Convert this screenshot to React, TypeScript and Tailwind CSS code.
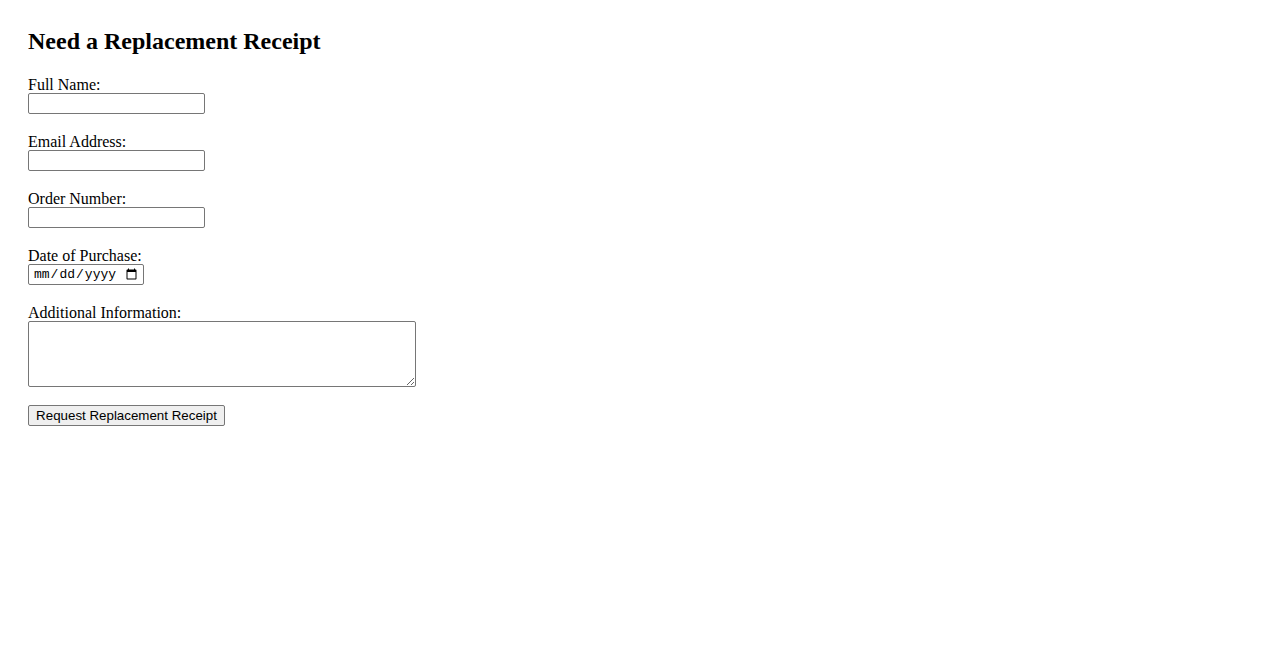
import React from "react";

export default function App() {
  const inputCls =
    "block w-[177px] h-[21px] border border-[#767676] rounded-[2px] bg-white px-[2px] text-[13.33px] [font-family:'Liberation_Sans',Arial,sans-serif] outline-none";
  const labelCls = "block h-[18px] text-[16px] leading-[19px]";
  return (
    <div className="min-h-[650px] bg-white text-black p-[28px] [font-family:'Liberation_Serif','Times_New_Roman',serif]">
      <h2 className="text-[24px] font-bold leading-[27px] mb-[20px]">Need a Replacement Receipt</h2>
      <form onSubmit={(e) => e.preventDefault()}>
        <div className="mb-[18px]">
          <label htmlFor="name" className={labelCls}>Full Name:</label>
          <input id="name" type="text" className={inputCls} />
        </div>
        <div className="mb-[18px]">
          <label htmlFor="email" className={labelCls}>Email Address:</label>
          <input id="email" type="email" className={inputCls} />
        </div>
        <div className="mb-[18px]">
          <label htmlFor="order" className={labelCls}>Order Number:</label>
          <input id="order" type="text" className={inputCls} />
        </div>
        <div className="mb-[18px]">
          <label htmlFor="date" className={labelCls}>Date of Purchase:</label>
          <input
            id="date"
            type="date"
            className="block w-[116px] h-[21px] border border-[#767676] rounded-[2px] bg-white pl-[4px] pr-[3px] text-[13px] leading-[17px] [font-family:'Liberation_Mono','Courier_New',monospace] outline-none"
          />
        </div>
        <div className="mb-[18px]">
          <label htmlFor="info" className={labelCls}>Additional Information:</label>
          <textarea
            id="info"
            className="block w-[388px] h-[66px] border border-[#767676] rounded-[2px] bg-white p-[2px] text-[13.33px] [font-family:'Liberation_Mono',monospace] outline-none resize"
          />
        </div>
        <button
          type="submit"
          className="block w-[197px] h-[21px] border border-[#767676] rounded-[2px] bg-[#efefef] text-[13.33px] leading-[17px] text-black [font-family:'Liberation_Sans',Arial,sans-serif]"
        >
          Request Replacement Receipt
        </button>
      </form>
    </div>
  );
}
